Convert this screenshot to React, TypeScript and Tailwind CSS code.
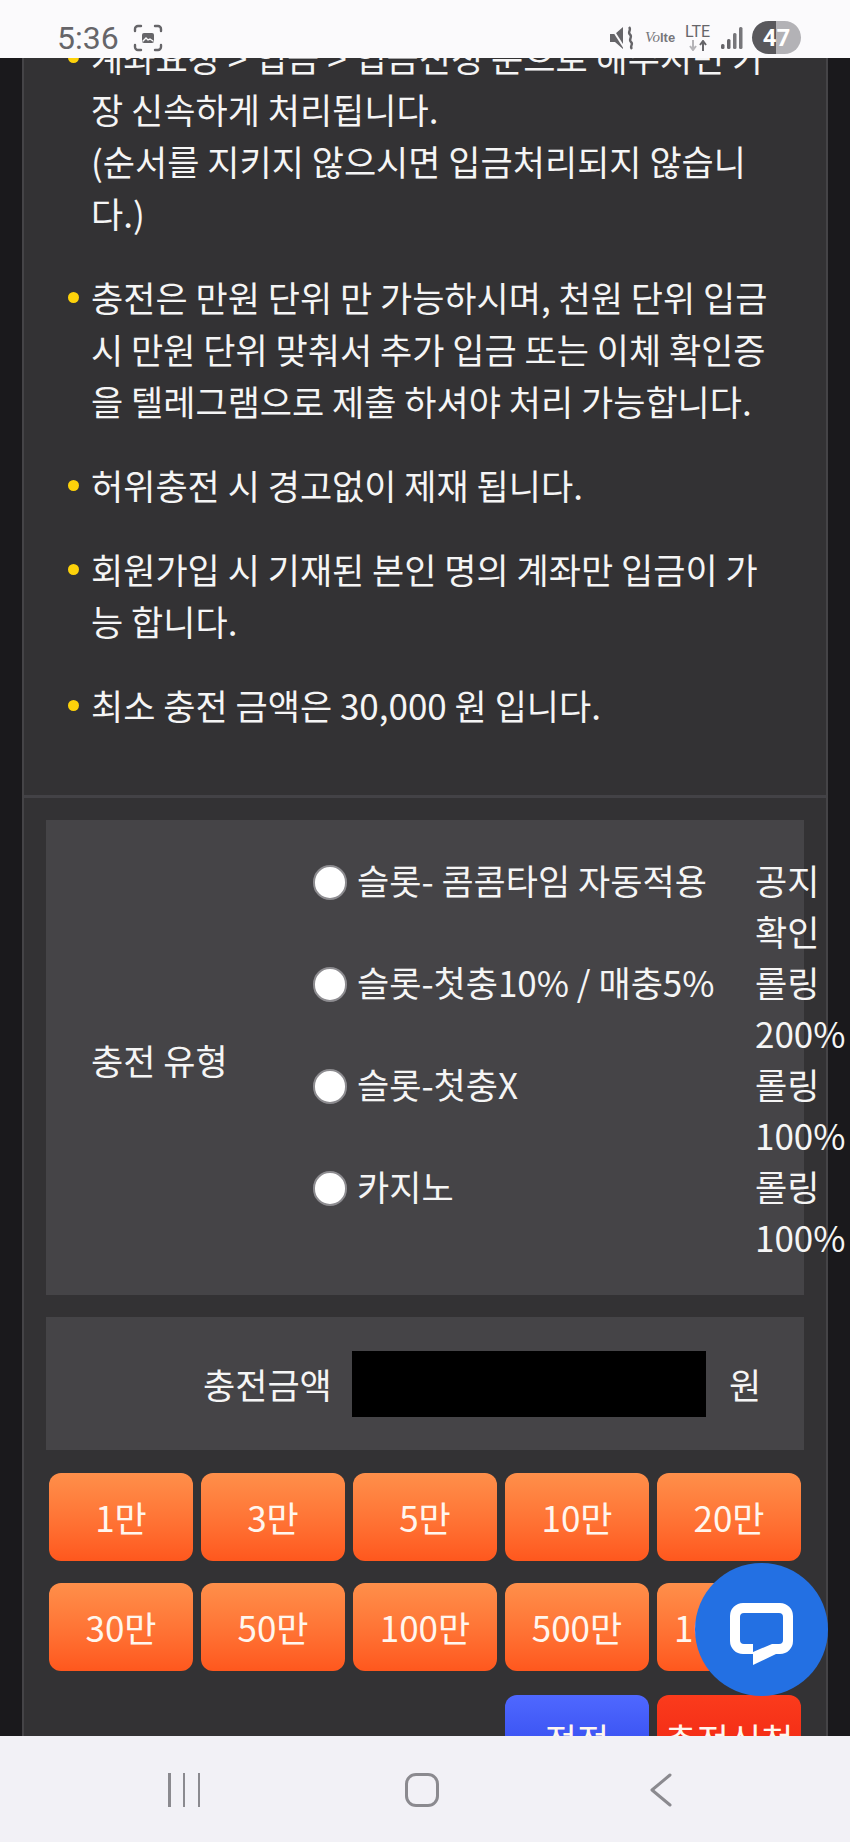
import * as React from 'react';

const notices: string[][] = [
  ['계좌요청 > 입금 > 입금신청 순으로 해주시면 가', '장 신속하게 처리됩니다.', '(순서를 지키지 않으시면 입금처리되지 않습니', '다.)'],
  ['충전은 만원 단위 만 가능하시며, 천원 단위 입금', '시 만원 단위 맞춰서 추가 입금 또는 이체 확인증', '을 텔레그램으로 제출 하셔야 처리 가능합니다.'],
  ['허위충전 시 경고없이 제재 됩니다.'],
  ['회원가입 시 기재된 본인 명의 계좌만 입금이 가', '능 합니다.'],
  ['최소 충전 금액은 30,000 원 입니다.'],
];

const options = [
  { label: '슬롯- 콤콤타임 자동적용', note: '공지 확인' },
  { label: '슬롯-첫충10% / 매충5%', note: '롤링 200%' },
  { label: '슬롯-첫충X', note: '롤링 100%' },
  { label: '카지노', note: '롤링 100%' },
];

const amounts = ['1만', '3만', '5만', '10만', '20만', '30만', '50만', '100만', '500만', '1000만'];

const StatusBar = () => (
  <div className="relative z-10 flex h-[58px] shrink-0 items-start justify-between bg-[#fbfafc] pl-[57px] pr-[49px] pt-[19px] text-[#666569]">
    <div className="flex items-center gap-[14px]">
      <span className="font-['Roboto',sans-serif] text-[32px] leading-[38px]">5:36</span>
      <svg width="30" height="28" viewBox="0 0 30 28" fill="none" stroke="#666569" strokeWidth="2.4" strokeLinecap="round">
        <path d="M2 7V5a3 3 0 0 1 3-3h3M22 2h3a3 3 0 0 1 3 3v2M28 21v2a3 3 0 0 1-3 3h-3M8 26H5a3 3 0 0 1-3-3v-2" />
        <rect x="9" y="9" width="12" height="10" rx="2" fill="#666569" stroke="none" />
        <path d="M10 17l3-3 2 2 2-1 3 2" stroke="#fbfafc" strokeWidth="1.4" />
      </svg>
    </div>
    <div className="flex items-center pt-[2px]">
      <svg width="25" height="24" viewBox="0 0 25 24" fill="#666569">
        <path d="M0 8h5l8-7v22l-8-7H0z" />
        <path d="M1 1l14 22" stroke="#fbfafc" strokeWidth="2" />
        <path d="M19 1c3 3-2 5 1 7.500s-2 5 1 7.500-2 4 1 7" fill="none" stroke="#666569" strokeWidth="2.400" />
      </svg>
      <div className="ml-[10px] flex w-[32px] items-baseline whitespace-nowrap leading-none text-[#77767a]">
        <span className="font-['Liberation_Serif',serif] text-[15px] italic">Vo</span>
        <span className="font-['Liberation_Sans',sans-serif] text-[13px] font-bold">lte</span>
      </div>
      <div className="ml-[7px] flex w-[27px] flex-col items-center">
        <span className="font-['Roboto',sans-serif] text-[16px] leading-[16px]">LTE</span>
        <svg width="20" height="11" viewBox="0 0 20 11" fill="none" strokeWidth="2">
          <path d="M5 0v9M2 6l3 4 3-4" stroke="#b5b4b8" />
          <path d="M15 11V2M12 5l3-4 3 4" stroke="#666569" />
        </svg>
      </div>
      <svg className="ml-[10px]" width="22" height="24" viewBox="0 0 22 24" fill="#666569">
        <rect x="0" y="18" width="3.500" height="5" rx="1.500" />
        <rect x="6" y="13" width="3.500" height="10" rx="1.500" />
        <rect x="12" y="7" width="3.500" height="16" rx="1.500" fill="#77767a" />
        <rect x="18" y="1" width="3.500" height="22" rx="1.500" fill="#77767a" />
      </svg>
      <div className="ml-[9px] flex h-[33px] w-[49px] items-center justify-center rounded-full bg-[linear-gradient(to_right,#59585c_0_48%,#b3b2b6_48%_100%)] font-['Roboto',sans-serif] text-[24px] font-bold text-white">47</div>
    </div>
  </div>
);

const Notices = () => (
  <div className="-mt-[27px] flex flex-col gap-[32px] pb-[64px] pl-[67px]">
    {notices.map((lines, i) => (
      <div key={i} className="relative whitespace-nowrap">
        <span className="absolute -left-[23px] top-[21px] h-[11px] w-[11px] rounded-full bg-[#fdd20a]" />
        {lines.map((line, j) => (
          <div key={j}>{line}</div>
        ))}
      </div>
    ))}
  </div>
);

const ChargeType = () => (
  <div className="flex h-[475px] items-center bg-[#454447] pl-[45px]">
    <div className="w-[222px] shrink-0 pt-[4px]">충전 유형</div>
    <div className="flex flex-col">
      {options.map((option) => (
        <div key={option.label} className="flex h-[102px] items-start leading-[51px]">
          <span className="mt-[11px] h-[35px] w-[34px] shrink-0 rounded-full border-2 border-[#8d8c90] bg-white" />
          <span className="ml-[10px] w-[398px] shrink-0 whitespace-nowrap">{option.label}</span>
          <span className="w-[66px] shrink-0 break-keep">{option.note}</span>
        </div>
      ))}
    </div>
  </div>
);

const AmountField = () => (
  <div className="mt-[22px] flex h-[133px] items-center bg-[#454447] pl-[157px]">
    <span className="w-[149px] shrink-0">충전금액</span>
    <div className="h-[66px] w-[354px] shrink-0 bg-black" />
    <span className="ml-[23px]">원</span>
  </div>
);

const ActionButton = ({ className, children }: { className: string; children: React.ReactNode }) => (
  <button className={`h-[88px] rounded-[12px] text-[#fff6ee] ${className}`}>{children}</button>
);

const AmountButtons = () => (
  <div className="ml-[3px] mt-[23px] grid w-[752px] grid-cols-5 gap-x-[8px] gap-y-[22px]">
    {amounts.map((amount) => (
      <ActionButton key={amount} className="bg-gradient-to-b from-[#ff8f4a] to-[#ff571d]">
        {amount}
      </ActionButton>
    ))}
    <ActionButton className="col-start-4 mt-[2px] bg-gradient-to-b from-[#4f68ff] to-[#2c3fe8]">정정</ActionButton>
    <ActionButton className="mt-[2px] bg-gradient-to-b from-[#fb3b1c] to-[#ee1d10]">충전신청</ActionButton>
  </div>
);

const ChatBubble = () => (
  <div className="absolute left-[695px] top-[1563px] z-20 flex h-[133px] w-[133px] items-center justify-center rounded-full bg-[#2370e3]">
    <svg className="mt-[9px]" width="63" height="62" viewBox="0 0 63 62" fill="#fff" fillRule="evenodd">
      <path d="M13 0H50a13 13 0 0 1 13 13V38a13 13 0 0 1-13 13H46L23 62V51H13a13 13 0 0 1-13-13V13A13 13 0 0 1 13 0zM14 10a4 4 0 0 0-4 4V37a4 4 0 0 0 4 4H23V49L42 41H49a4 4 0 0 0 4-4V14a4 4 0 0 0-4-4z" />
    </svg>
  </div>
);

const NavBar = () => (
  <div className="relative z-10 flex h-[106px] shrink-0 items-start bg-[#f2f1f6] pt-[37px]">
    <div className="ml-[168px] flex h-[34px] w-[32px] justify-between">
      <span className="w-[2.5px] bg-[#8b8a8f]" />
      <span className="w-[2.5px] bg-[#8b8a8f]" />
      <span className="w-[2.5px] bg-[#8b8a8f]" />
    </div>
    <div className="ml-[205px] h-[34px] w-[34px] rounded-[11px] border-[3px] border-[#8b8a8f]" />
    <svg className="ml-[210px]" width="24" height="34" viewBox="0 0 24 34" fill="none" stroke="#8b8a8f" strokeWidth="3" strokeLinecap="round" strokeLinejoin="round">
      <path d="M21 2L3 17l18 15" />
    </svg>
  </div>
);

export default function App() {
  return (
    <div className="relative flex h-[1842px] w-[850px] flex-col overflow-hidden bg-[#1a191c] font-['Noto_Sans_CJK_KR','Noto_Sans',sans-serif] text-[35px] leading-[52px] text-[#f5f5f5]">
      <StatusBar />
      <main className="mx-[22px] min-h-0 flex-1 border-x-2 border-[#454447] bg-[#333234]">
        <Notices />
        <div className="h-[3px] bg-[#434246]" />
        <div className="px-[22px] pt-[22px]">
          <ChargeType />
          <AmountField />
          <AmountButtons />
        </div>
      </main>
      <ChatBubble />
      <NavBar />
    </div>
  );
}
